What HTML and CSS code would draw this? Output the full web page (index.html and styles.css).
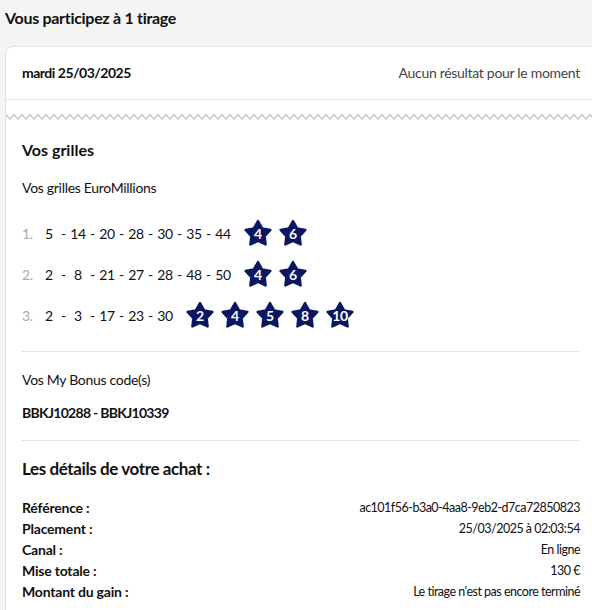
FILE: index.html
```html
<!DOCTYPE html>
<html lang="fr">
<head>
<meta charset="utf-8">
<title>Vous participez à 1 tirage</title>
<link rel="stylesheet" href="styles.css">
</head>
<body>
<h1 class="page-title">Vous participez à 1 tirage</h1>
<div class="card">
  <div class="card-head">
    <span class="draw-date">mardi 25/03/2025</span>
    <span class="draw-status">Aucun résultat pour le moment</span>
  </div>
  <svg class="zigzag" width="100%" height="10" aria-hidden="true">
    <defs>
      <pattern id="zz" width="8" height="10" patternUnits="userSpaceOnUse">
        <polyline points="0,2.5 4,7 8,2.5" fill="none" stroke="#cbcbdd" stroke-width="1.6"/>
      </pattern>
    </defs>
    <rect x="0" y="0" width="100%" height="10" fill="url(#zz)"/>
  </svg>
  <div class="card-body">
    <h2 class="section-title">Vos grilles</h2>
    <p class="sub">Vos grilles EuroMillions</p>
    <ol class="grids">
      <li class="grid-row">
        <span class="idx">1.</span>
        <span class="num">5</span><span class="dash">-</span><span class="num">14</span><span class="dash">-</span><span class="num">20</span><span class="dash">-</span><span class="num">28</span><span class="dash">-</span><span class="num">30</span><span class="dash">-</span><span class="num">35</span><span class="dash">-</span><span class="num">44</span>
        <span class="stars">
          <span class="star"><svg viewBox="0 0 28 28"><polygon points="14,2 18.11,9.34 26.36,10.98 20.66,17.16 21.64,25.52 14,22 6.36,25.52 7.34,17.16 1.64,10.98 9.89,9.34"/></svg><span class="star-n">4</span></span>
          <span class="star"><svg viewBox="0 0 28 28"><polygon points="14,2 18.11,9.34 26.36,10.98 20.66,17.16 21.64,25.52 14,22 6.36,25.52 7.34,17.16 1.64,10.98 9.89,9.34"/></svg><span class="star-n">6</span></span>
        </span>
      </li>
      <li class="grid-row">
        <span class="idx">2.</span>
        <span class="num">2</span><span class="dash">-</span><span class="num">8</span><span class="dash">-</span><span class="num">21</span><span class="dash">-</span><span class="num">27</span><span class="dash">-</span><span class="num">28</span><span class="dash">-</span><span class="num">48</span><span class="dash">-</span><span class="num">50</span>
        <span class="stars">
          <span class="star"><svg viewBox="0 0 28 28"><polygon points="14,2 18.11,9.34 26.36,10.98 20.66,17.16 21.64,25.52 14,22 6.36,25.52 7.34,17.16 1.64,10.98 9.89,9.34"/></svg><span class="star-n">4</span></span>
          <span class="star"><svg viewBox="0 0 28 28"><polygon points="14,2 18.11,9.34 26.36,10.98 20.66,17.16 21.64,25.52 14,22 6.36,25.52 7.34,17.16 1.64,10.98 9.89,9.34"/></svg><span class="star-n">6</span></span>
        </span>
      </li>
      <li class="grid-row">
        <span class="idx">3.</span>
        <span class="num">2</span><span class="dash">-</span><span class="num">3</span><span class="dash">-</span><span class="num">17</span><span class="dash">-</span><span class="num">23</span><span class="dash">-</span><span class="num">30</span>
        <span class="stars">
          <span class="star"><svg viewBox="0 0 28 28"><polygon points="14,2 18.11,9.34 26.36,10.98 20.66,17.16 21.64,25.52 14,22 6.36,25.52 7.34,17.16 1.64,10.98 9.89,9.34"/></svg><span class="star-n">2</span></span>
          <span class="star"><svg viewBox="0 0 28 28"><polygon points="14,2 18.11,9.34 26.36,10.98 20.66,17.16 21.64,25.52 14,22 6.36,25.52 7.34,17.16 1.64,10.98 9.89,9.34"/></svg><span class="star-n">4</span></span>
          <span class="star"><svg viewBox="0 0 28 28"><polygon points="14,2 18.11,9.34 26.36,10.98 20.66,17.16 21.64,25.52 14,22 6.36,25.52 7.34,17.16 1.64,10.98 9.89,9.34"/></svg><span class="star-n">5</span></span>
          <span class="star"><svg viewBox="0 0 28 28"><polygon points="14,2 18.11,9.34 26.36,10.98 20.66,17.16 21.64,25.52 14,22 6.36,25.52 7.34,17.16 1.64,10.98 9.89,9.34"/></svg><span class="star-n">8</span></span>
          <span class="star"><svg viewBox="0 0 28 28"><polygon points="14,2 18.11,9.34 26.36,10.98 20.66,17.16 21.64,25.52 14,22 6.36,25.52 7.34,17.16 1.64,10.98 9.89,9.34"/></svg><span class="star-n">10</span></span>
        </span>
      </li>
    </ol>
    <div class="block">
      <p class="sub">Vos My Bonus code(s)</p>
      <p class="codes">BBKJ10288 - BBKJ10339</p>
    </div>
    <div class="block">
      <h2 class="section-title details-title">Les détails de votre achat :</h2>
      <dl class="details">
        <div class="d-row"><dt>Référence :</dt><dd>ac101f56-b3a0-4aa8-9eb2-d7ca72850823</dd></div>
        <div class="d-row"><dt>Placement :</dt><dd>25/03/2025 à 02:03:54</dd></div>
        <div class="d-row"><dt>Canal :</dt><dd>En ligne</dd></div>
        <div class="d-row"><dt>Mise totale :</dt><dd>130 €</dd></div>
        <div class="d-row"><dt>Montant du gain :</dt><dd>Le tirage n'est pas encore terminé</dd></div>
      </dl>
    </div>
  </div>
</div>
</body>
</html>
```
FILE: styles.css
```css
* { box-sizing: border-box; }
html, body {
  margin: 0;
  padding: 0;
  background: #f4f4f4;
  overflow: hidden;
}
body {
  font-family: Lato, "Liberation Sans", Arial, sans-serif;
  color: #111;
  font-size: 14px;
  letter-spacing: -0.3px;
  width: 592px;
}
.page-title {
  margin: 0;
  padding: 8px 0 0 5px;
  font-size: 16px;
  line-height: 20px;
  font-weight: bold;
}
.card {
  margin: 18px -8px 0 5px;
  background: #fff;
  border: 1px solid #e3e3e3;
  border-radius: 8px 8px 0 0;
}
.card-head {
  display: flex;
  justify-content: space-between;
  align-items: center;
  height: 53px;
  padding: 0 19px 0 16px;
  border-bottom: 1px solid #e3e3e3;
  line-height: 20px;
}
.draw-date { font-weight: bold; font-size: 14px; letter-spacing: -0.5px; }
.draw-status { color: #444; font-size: 14px; }
.zigzag {
  display: block;
  margin-top: 12px;
  height: 10px;
}
.card-body {
  padding: 17px 19px 0 16px;
}
.section-title {
  margin: 0;
  font-size: 16px;
  line-height: 22px;
  font-weight: bold;
  letter-spacing: 0;
}
.sub {
  margin: 17px 0 0;
  font-size: 14px;
  line-height: 20px;
}
.grids {
  list-style: none;
  margin: 21px 0 0;
  padding: 0 0 22px;
  display: flex;
  flex-direction: column;
  gap: 13px;
  border-bottom: 1px solid #e3e3e3;
}
.grid-row {
  display: flex;
  align-items: center;
  height: 28px;
  font-size: 14px;
}
.idx {
  width: 17px;
  color: #aaa;
}
.num {
  width: 20px;
  text-align: center;
}
.dash {
  width: 9px;
  text-align: center;
}
.stars {
  display: flex;
  gap: 7px;
  margin-left: 11px;
}
.star {
  display: grid;
  width: 28px;
  height: 28px;
  place-items: center;
}
.star svg,
.star-n {
  grid-area: 1 / 1;
}
.star svg {
  width: 28px;
  height: 28px;
  fill: #0c1762;
  stroke: #0c1762;
  stroke-width: 2.4;
  stroke-linejoin: round;
}
.star-n {
  color: #fff;
  font-weight: bold;
  font-size: 14px;
  line-height: 1;
  padding-top: 2px;
}
.block {
  border-bottom: 1px solid #e3e3e3;
  padding-bottom: 17px;
}
.block:last-child { border-bottom: 0; }
.block .sub { margin-top: 18px; }
.codes {
  margin: 13px 0 0;
  font-weight: bold;
  line-height: 20px;
  letter-spacing: -0.7px;
}
.details-title {
  margin-top: 17px;
  font-size: 17px;
  letter-spacing: -0.4px;
}
.details {
  margin: 17px 0 0;
}
.d-row {
  display: flex;
  justify-content: space-between;
  align-items: center;
  height: 21px;
}
.d-row dt { font-weight: bold; font-size: 14px; letter-spacing: -0.2px; }
.d-row dd { margin: 0; font-size: 12.5px; letter-spacing: -0.5px; color: #111; }
```
